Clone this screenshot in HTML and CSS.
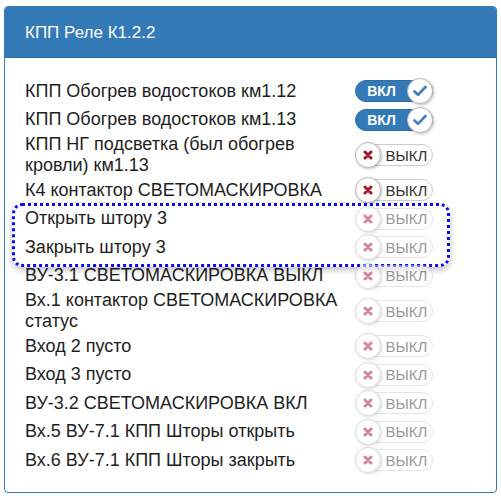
FILE: index.html
```html
<!DOCTYPE html>
<html>

<head>
    <meta charset="utf-8">
    <title>КПП Реле К1.2.2</title>
    <link rel="stylesheet" href="styles.css">
</head>

<body>
    <div class="panel">
        <div class="panel-heading">КПП Реле К1.2.2</div>
        <div class="panel-body">
            <!-- выделение -->
            <div class="mark"></div>

            <div class="row">
                <div class="name">КПП Обогрев водостоков км1.12</div>
                <div class="switch on"><span class="txt">ВКЛ</span><span class="knob"><svg width="14" height="12" viewBox="0 0 14 12"><path d="M1.5 6.5 L5 9.8 L12.5 2" fill="none" stroke="#3f7fb8" stroke-width="2.6" stroke-linecap="round" stroke-linejoin="round"/></svg></span></div>
            </div>
            <div class="row">
                <div class="name">КПП Обогрев водостоков км1.13</div>
                <div class="switch on"><span class="txt">ВКЛ</span><span class="knob"><svg width="14" height="12" viewBox="0 0 14 12"><path d="M1.5 6.5 L5 9.8 L12.5 2" fill="none" stroke="#3f7fb8" stroke-width="2.6" stroke-linecap="round" stroke-linejoin="round"/></svg></span></div>
            </div>
            <div class="row">
                <div class="name">КПП НГ подсветка (был обогрев кровли) км1.13</div>
                <div class="switch"><span class="knob"><svg width="10" height="10" viewBox="0 0 10 10"><path d="M2 2 L8 8 M8 2 L2 8" stroke="#a8102c" stroke-width="3" stroke-linecap="round"/></svg></span><span class="txt">ВЫКЛ</span></div>
            </div>
            <div class="row">
                <div class="name">К4 контактор СВЕТОМАСКИРОВКА</div>
                <div class="switch"><span class="knob"><svg width="10" height="10" viewBox="0 0 10 10"><path d="M2 2 L8 8 M8 2 L2 8" stroke="#a8102c" stroke-width="3" stroke-linecap="round"/></svg></span><span class="txt">ВЫКЛ</span></div>
            </div>
            <div class="row">
                <div class="name">Открыть штору 3</div>
                <div class="switch disabled"><span class="knob"><svg width="10" height="10" viewBox="0 0 10 10"><path d="M2 2 L8 8 M8 2 L2 8" stroke="#a8102c" stroke-width="3" stroke-linecap="round"/></svg></span><span class="txt">ВЫКЛ</span></div>
            </div>
            <div class="row">
                <div class="name">Закрыть штору 3</div>
                <div class="switch disabled"><span class="knob"><svg width="10" height="10" viewBox="0 0 10 10"><path d="M2 2 L8 8 M8 2 L2 8" stroke="#a8102c" stroke-width="3" stroke-linecap="round"/></svg></span><span class="txt">ВЫКЛ</span></div>
            </div>
            <div class="row">
                <div class="name">ВУ-3.1 СВЕТОМАСКИРОВКА ВЫКЛ</div>
                <div class="switch disabled"><span class="knob"><svg width="10" height="10" viewBox="0 0 10 10"><path d="M2 2 L8 8 M8 2 L2 8" stroke="#a8102c" stroke-width="3" stroke-linecap="round"/></svg></span><span class="txt">ВЫКЛ</span></div>
            </div>
            <div class="row">
                <div class="name">Вх.1 контактор СВЕТОМАСКИРОВКА статус</div>
                <div class="switch disabled"><span class="knob"><svg width="10" height="10" viewBox="0 0 10 10"><path d="M2 2 L8 8 M8 2 L2 8" stroke="#a8102c" stroke-width="3" stroke-linecap="round"/></svg></span><span class="txt">ВЫКЛ</span></div>
            </div>
            <div class="row">
                <div class="name">Вход 2 пусто</div>
                <div class="switch disabled"><span class="knob"><svg width="10" height="10" viewBox="0 0 10 10"><path d="M2 2 L8 8 M8 2 L2 8" stroke="#a8102c" stroke-width="3" stroke-linecap="round"/></svg></span><span class="txt">ВЫКЛ</span></div>
            </div>
            <div class="row">
                <div class="name">Вход 3 пусто</div>
                <div class="switch disabled"><span class="knob"><svg width="10" height="10" viewBox="0 0 10 10"><path d="M2 2 L8 8 M8 2 L2 8" stroke="#a8102c" stroke-width="3" stroke-linecap="round"/></svg></span><span class="txt">ВЫКЛ</span></div>
            </div>
            <div class="row">
                <div class="name">ВУ-3.2 СВЕТОМАСКИРОВКА ВКЛ</div>
                <div class="switch disabled"><span class="knob"><svg width="10" height="10" viewBox="0 0 10 10"><path d="M2 2 L8 8 M8 2 L2 8" stroke="#a8102c" stroke-width="3" stroke-linecap="round"/></svg></span><span class="txt">ВЫКЛ</span></div>
            </div>
            <div class="row">
                <div class="name">Вх.5 ВУ-7.1 КПП Шторы открыть</div>
                <div class="switch disabled"><span class="knob"><svg width="10" height="10" viewBox="0 0 10 10"><path d="M2 2 L8 8 M8 2 L2 8" stroke="#a8102c" stroke-width="3" stroke-linecap="round"/></svg></span><span class="txt">ВЫКЛ</span></div>
            </div>
            <div class="row">
                <div class="name">Вх.6 ВУ-7.1 КПП Шторы закрыть</div>
                <div class="switch disabled"><span class="knob"><svg width="10" height="10" viewBox="0 0 10 10"><path d="M2 2 L8 8 M8 2 L2 8" stroke="#a8102c" stroke-width="3" stroke-linecap="round"/></svg></span><span class="txt">ВЫКЛ</span></div>
            </div>
        </div>
    </div>
</body>

</html>
```

FILE: styles.css
```css
* {
    box-sizing: border-box;
}

body {
    margin: 0;
    padding: 6px 4px 0 4px;
    background: #fff;
    font-family: "Liberation Sans", Arial, sans-serif;
    color: #1e1e1e;
}

.panel {
    height: 487px;
    border: 1px solid #337ab7;
    border-radius: 4px;
    overflow: hidden;
}

.panel-heading {
    height: 51px;
    padding: 0 20px;
    background-color: #337ab7;
    border-bottom: 1px solid #2e6da4;
    color: #fff;
    font-size: 17px;
    line-height: 51px;
}

.panel-body {
    position: relative;
    padding: 19px 20px 0 20px;
}

.row {
    display: flex;
    align-items: center;
    min-height: 28.5px;
}

.name {
    flex: 0 0 330px;
    font-size: 18px;
    line-height: 21px;
}

.switch {
    display: flex;
    align-items: center;
    width: 78px;
    height: 22px;
    border: 1px solid #ccc;
    border-radius: 11px;
    background: #fff;
}

.switch .knob {
    display: flex;
    align-items: center;
    justify-content: center;
    flex: 0 0 26px;
    width: 26px;
    height: 26px;
    margin-left: -1px;
    border: 1px solid #bbb;
    border-radius: 50%;
    background: #fff;
    box-shadow: 1px 1px 3px rgba(0, 0, 0, 0.25);
}

.switch .txt {
    flex: 1;
    text-align: center;
    font-size: 15px;
    color: #333;
}

.switch.on {
    background-color: #337ab7;
    border-color: #2e6da4;
}

.switch.on .txt {
    color: #fff;
    font-weight: bold;
    font-size: 14px;
}

.switch.on .knob {
    margin-left: 0;
    margin-right: -1px;
}

.switch.disabled {
    opacity: 0.5;
}

/* пунктирная рамка вокруг двух строк */
.mark {
    position: absolute;
    left: 7px;
    top: 145px;
    width: 438px;
    height: 64px;
    border: 3px dotted #0a0af5;
    border-radius: 10px;
    box-shadow: 0 3px 6px rgba(0, 0, 0, 0.25);
    pointer-events: none;
}
```
